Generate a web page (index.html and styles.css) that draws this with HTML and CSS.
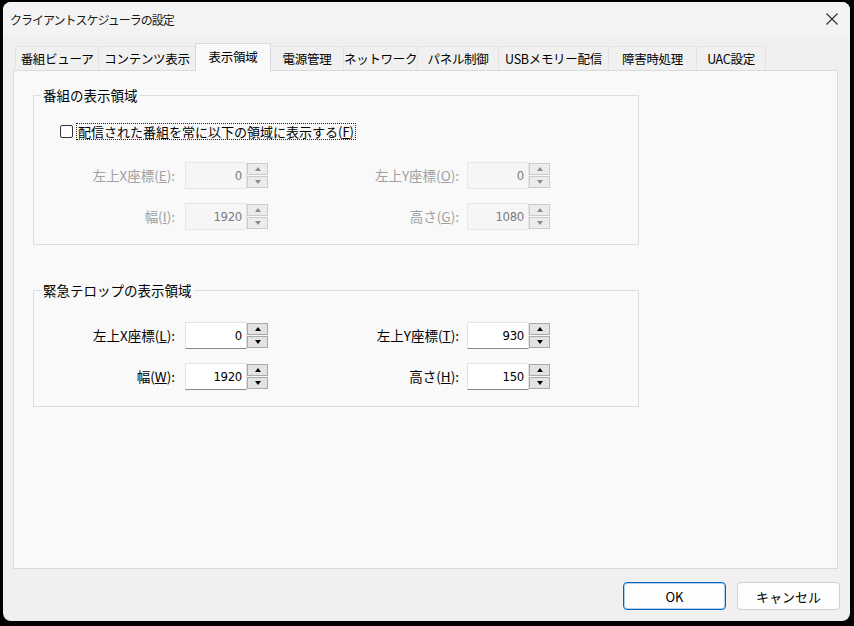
FILE: index.html
```html
<!DOCTYPE html>
<html lang="ja">
<head>
<meta charset="utf-8">
<title>クライアントスケジューラの設定</title>
<link rel="stylesheet" href="styles.css">
</head>
<body>
<div class="window">
  <div class="titlebar">
    <span class="title">クライアントスケジューラの設定</span>
    <button class="close" aria-label="閉じる">
      <svg width="12" height="12" viewBox="0 0 12 12"><path d="M0.5 0.5 L11.5 11.5 M11.5 0.5 L0.5 11.5" stroke="#2b2b2b" stroke-width="1.1" fill="none"/></svg>
    </button>
  </div>
  <div class="tabs">
    <div class="tab t1">番組ビューア</div>
    <div class="tab t2">コンテンツ表示</div>
    <div class="tab t3 active">表示領域</div>
    <div class="tab t4">電源管理</div>
    <div class="tab t5">ネットワーク</div>
    <div class="tab t6">パネル制御</div>
    <div class="tab t7">USBメモリー配信</div>
    <div class="tab t8">障害時処理</div>
    <div class="tab t9">UAC設定</div>
  </div>
  <div class="panel">
    <fieldset class="group g1">
      <legend>番組の表示領域</legend>
      <div class="check-row">
        <span class="checkbox"></span>
        <span class="check-label">配信された番組を常に以下の領域に表示する(<u>F</u>)</span>
      </div>
      <div class="rows rows1 disabled">
        <div class="field-row">
          <span class="lbl l1">左上X座標(<u>E</u>):</span>
          <div class="spin"><div class="num">0</div><div class="arrows"><span class="up"></span><span class="down"></span></div></div>
          <span class="lbl l2">左上Y座標(<u>O</u>):</span>
          <div class="spin"><div class="num">0</div><div class="arrows"><span class="up"></span><span class="down"></span></div></div>
        </div>
        <div class="field-row">
          <span class="lbl l1">幅(<u>I</u>):</span>
          <div class="spin"><div class="num">1920</div><div class="arrows"><span class="up"></span><span class="down"></span></div></div>
          <span class="lbl l2">高さ(<u>G</u>):</span>
          <div class="spin"><div class="num">1080</div><div class="arrows"><span class="up"></span><span class="down"></span></div></div>
        </div>
      </div>
    </fieldset>
    <fieldset class="group g2">
      <legend>緊急テロップの表示領域</legend>
      <div class="rows rows2">
        <div class="field-row">
          <span class="lbl l1">左上X座標(<u>L</u>):</span>
          <div class="spin"><div class="num">0</div><div class="arrows"><span class="up"></span><span class="down"></span></div></div>
          <span class="lbl l2">左上Y座標(<u>T</u>):</span>
          <div class="spin"><div class="num">930</div><div class="arrows"><span class="up"></span><span class="down"></span></div></div>
        </div>
        <div class="field-row">
          <span class="lbl l1">幅(<u>W</u>):</span>
          <div class="spin"><div class="num">1920</div><div class="arrows"><span class="up"></span><span class="down"></span></div></div>
          <span class="lbl l2">高さ(<u>H</u>):</span>
          <div class="spin"><div class="num">150</div><div class="arrows"><span class="up"></span><span class="down"></span></div></div>
        </div>
      </div>
    </fieldset>
  </div>
  <div class="footer">
    <button class="btn primary">OK</button>
    <button class="btn">キャンセル</button>
  </div>
</div>
</body>
</html>
```
FILE: styles.css
```css
html, body {
  margin: 0;
  padding: 0;
}
body {
  background: #000;
  width: 854px;
  height: 626px;
  overflow: hidden;
}
.window {
  margin: 2px 0 0 3px;
  width: 847px;
  height: 619px;
  background: #f0f0f0;
  border-radius: 8px;
  display: flex;
  flex-direction: column;
  overflow: hidden;
  font-family: "Noto Sans CJK JP", "Noto Sans", sans-serif;
  color: #000;
}
.titlebar {
  height: 34px;
  flex: none;
  display: flex;
  align-items: center;
  justify-content: space-between;
  padding: 0 10px 0 7px;
  background: #f3f3f3;
}
.title {
  font-size: 12px;
  letter-spacing: -1px;
  color: #1a1a1a;
}
.close {
  width: 16px;
  height: 16px;
  padding: 0;
  border: none;
  background: transparent;
  display: flex;
  align-items: center;
  justify-content: center;
}
.tabs {
  flex: none;
  display: flex;
  align-items: flex-end;
  margin: 7px 0 0 12px;
  height: 27px;
  position: relative;
  z-index: 1;
}
.tab {
  height: 24px;
  box-sizing: border-box;
  font-size: 12.5px;
  letter-spacing: -0.3px;
  line-height: 23px;
  text-align: center;
  white-space: nowrap;
  border-top: 1px solid #e6e6e6;
  border-right: 1px solid #e3e3e3;
}
.t1 { width: 84px; border-left: 1px solid #e3e3e3; }
.t2 { width: 97px; }
.t3 { width: 76px; }
.t4 { width: 73px; }
.t5 { width: 74px; }
.t6 { width: 81px; }
.t7 { width: 110px; }
.t8 { width: 88px; }
.t9 { width: 69px; }
.tab.active {
  height: 28px;
  margin-bottom: -1px;
  margin-left: -1px;
  background: #f9f9f9;
  border: 1px solid #d9d9d9;
  border-bottom: none;
  line-height: 25px;
}
.panel {
  flex: none;
  margin: 0 12px 0 10px;
  height: 499px;
  box-sizing: border-box;
  border: 1px solid #dadada;
  background: #f9f9f9;
  padding: 0 0 0 19px;
}
.group {
  box-sizing: border-box;
  width: 606px;
  margin: 16px 0 0 0;
  padding: 0 0 14px 0;
  border: 1px solid #dcdcdc;
  min-width: 0;
}
.g2 {
  margin-top: 37px;
  padding-bottom: 16px;
}
.group legend {
  font-size: 13.5px;
  line-height: 16px;
  padding: 0 2px;
  margin-left: 7px;
}
.check-row {
  margin-top: 19px;
  height: 18px;
  display: flex;
  align-items: center;
  padding-left: 26px;
}
.checkbox {
  width: 13px;
  height: 13px;
  box-sizing: border-box;
  border: 1px solid #333;
  border-radius: 2px;
  background: #fdfdfd;
  margin-right: 3px;
}
.check-label {
  font-size: 13px;
  line-height: 15px;
  padding: 0 1px;
  border: 1px dotted #222;
}
.rows {
  display: flex;
  flex-direction: column;
  gap: 14px;
}
.rows1 { margin-top: 22px; }
.rows2 { margin-top: 24px; }
.field-row {
  display: flex;
  align-items: center;
  height: 27px;
}
.lbl {
  font-size: 13.5px;
  line-height: 27px;
  text-align: right;
  white-space: nowrap;
}
.l1 { width: 141px; margin-right: 10px; }
.l2 { width: 191px; margin-right: 8px; }
.spin {
  display: flex;
  width: 83px;
  height: 27px;
}
.num {
  flex: 1;
  box-sizing: border-box;
  border: 1px solid #e4e4e4;
  border-bottom-color: #8a8a8a;
  background: #fff;
  text-align: right;
  padding-right: 4px;
  font-family: "Liberation Sans Narrow", "DejaVu Sans Condensed", "Liberation Sans", sans-serif;
  font-size: 13px;
  letter-spacing: -0.3px;
  line-height: 25px;
  color: #000;
}
.arrows {
  width: 21px;
  display: flex;
  flex-direction: column;
  gap: 1px;
  padding: 1px 0;
  box-sizing: border-box;
}
.arrows span {
  flex: 1;
  box-sizing: border-box;
  border: 1px solid #a9a9a9;
  background: #e3e3e3;
  display: flex;
  align-items: center;
  justify-content: center;
}
.arrows span::before {
  content: "";
  width: 0;
  height: 0;
  border-left: 3.5px solid transparent;
  border-right: 3.5px solid transparent;
}
.arrows .up::before { border-bottom: 4px solid #000; }
.arrows .down::before { border-top: 4px solid #000; }
.disabled .lbl { color: #a0a0a0; }
.disabled .num {
  background: #f6f6f6;
  border-color: #e6e6e6;
  color: #7c7c7c;
}
.disabled .arrows span {
  border-color: #cbcbcb;
  background: #ececec;
}
.disabled .arrows .up::before { border-bottom-color: #8c8c8c; }
.disabled .arrows .down::before { border-top-color: #8c8c8c; }
.footer {
  flex: none;
  display: flex;
  justify-content: flex-end;
  gap: 11px;
  padding: 13px 10px 0 0;
}
.btn {
  width: 103px;
  height: 28px;
  box-sizing: border-box;
  border: 1px solid #d0d0d0;
  border-radius: 4px;
  background: #fdfdfd;
  font-family: "Noto Sans CJK JP", "Noto Sans", sans-serif;
  font-size: 13px;
  color: #000;
  padding: 0;
}
.btn.primary {
  border-color: #0067c0;
  box-shadow: inset 0 0 0 1px rgba(0, 103, 192, 0.3);
}
```
